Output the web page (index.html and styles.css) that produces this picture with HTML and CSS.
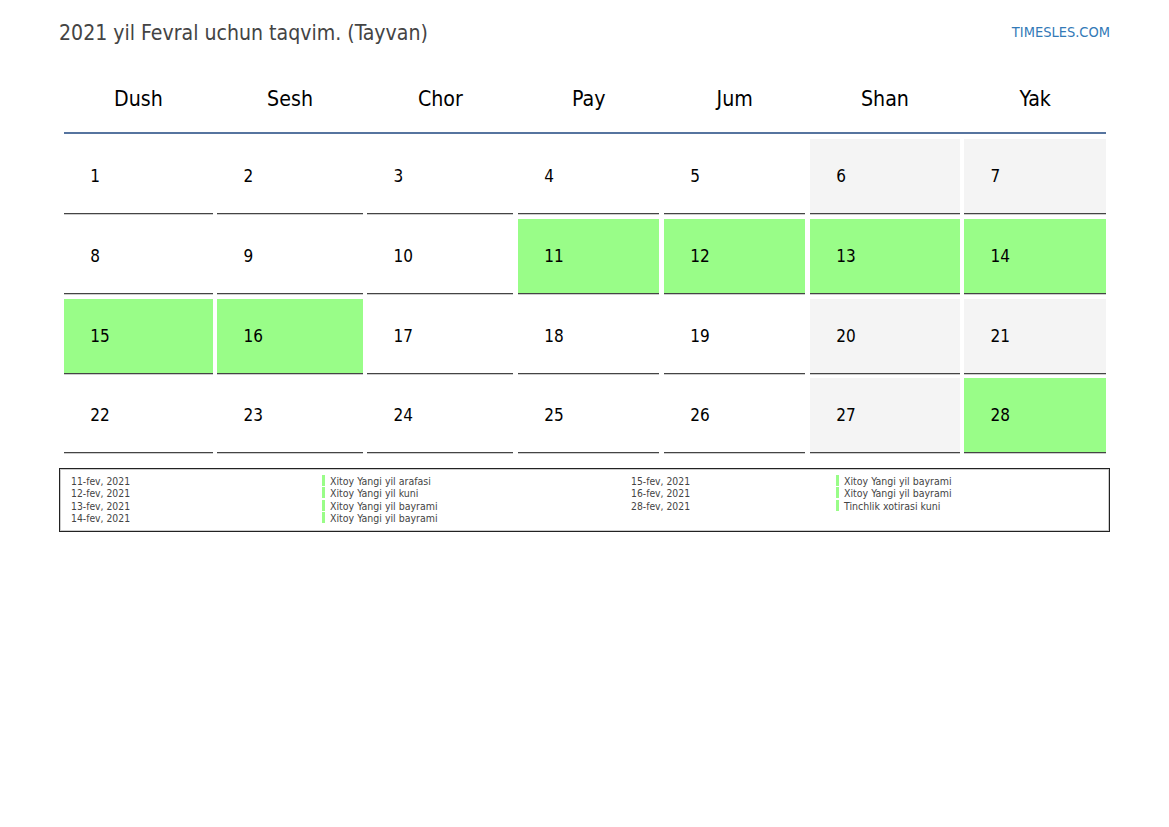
FILE: index.html
```html
<!DOCTYPE html>
<html lang="uz">
<head>
<meta charset="utf-8">
<title>2021 yil Fevral uchun taqvim. (Tayvan)</title>
<link rel="stylesheet" href="styles.css">
</head>
<body>
<header class="top">
  <h1 class="title">2021 yil Fevral uchun taqvim. (Tayvan)</h1>
  <a class="brand">TIMESLES.COM</a>
</header>
<main class="calendar">
  <div class="weekdays">
    <div>Dush</div><div>Sesh</div><div>Chor</div><div>Pay</div><div>Jum</div><div>Shan</div><div>Yak</div>
  </div>
  <div class="days">
    <div class="day">1</div><div class="day">2</div><div class="day">3</div><div class="day">4</div><div class="day">5</div><div class="day off">6</div><div class="day off">7</div>
    <div class="day">8</div><div class="day">9</div><div class="day">10</div><div class="day hol">11</div><div class="day hol">12</div><div class="day hol">13</div><div class="day hol">14</div>
    <div class="day hol">15</div><div class="day hol">16</div><div class="day">17</div><div class="day">18</div><div class="day">19</div><div class="day off">20</div><div class="day off">21</div>
    <div class="day">22</div><div class="day">23</div><div class="day">24</div><div class="day">25</div><div class="day">26</div><div class="day off">27</div><div class="day hol">28</div>
  </div>
</main>
<section class="legend">
  <div class="group">
    <span class="date">11-fev, 2021</span><span class="name">Xitoy Yangi yil arafasi</span>
    <span class="date">12-fev, 2021</span><span class="name">Xitoy Yangi yil kuni</span>
    <span class="date">13-fev, 2021</span><span class="name">Xitoy Yangi yil bayrami</span>
    <span class="date">14-fev, 2021</span><span class="name">Xitoy Yangi yil bayrami</span>
  </div>
  <div class="group second">
    <span class="date">15-fev, 2021</span><span class="name">Xitoy Yangi yil bayrami</span>
    <span class="date">16-fev, 2021</span><span class="name">Xitoy Yangi yil bayrami</span>
    <span class="date">28-fev, 2021</span><span class="name">Tinchlik xotirasi kuni</span>
  </div>
</section>
</body>
</html>
```
FILE: styles.css
```css
html, body { margin: 0; padding: 0; background: #fff; }
body { width: 1169px; height: 827px; overflow: hidden; font-family: "DejaVu Sans Condensed", "DejaVu Sans", sans-serif; font-stretch: condensed; color: #000; }

.top { display: flex; justify-content: space-between; align-items: flex-start; padding: 21px 59px 0; height: 43px; }
.title { margin: 0; font-size: 21.1px; font-weight: 400; line-height: 24px; color: #444; }
.brand { font-size: 14.5px; line-height: 22px; color: #337ab7; }

.calendar { margin: 0 63px 0 64px; }
.weekdays, .days { display: grid; grid-template-columns: 148.8px 145.5px 146.2px 141.5px 141.5px 149.9px 141.6px; column-gap: 4.5px; }
.weekdays { height: 67px; border-bottom: 2px solid #56749f; align-items: center; text-align: center; font-size: 21.2px; padding-top: 1px; }
.days { grid-auto-rows: 75px; row-gap: 4.8px; margin-top: 5px; }
.day { box-sizing: border-box; padding: 26px 0 0 26.2px; font-size: 17px; line-height: 22px; border-bottom: 1px solid #444; box-shadow: 0 1px 0 #ccc; }
.off { background: #f4f4f4; }
.hol { background: #99fd88; }

.legend { display: grid; grid-template-columns: 560px 1fr; box-sizing: border-box; margin: 15px 59px 0; height: 64px; border: 1px solid #222; box-shadow: inset 0 0 0 1px #ccc; padding: 5.6px 11px 0; font-size: 10.3px; line-height: 11px; color: #444; }
.group { display: grid; grid-template-columns: 251px 1fr; align-content: start; row-gap: 0.33px; }
.group.second { grid-template-columns: 205px 1fr; }
.date, .name { padding-top: 1px; }
.name { padding-left: 8px; font-size: 10.5px; background: linear-gradient(#99fd88, #99fd88) left top / 3px 11px no-repeat; }
```
